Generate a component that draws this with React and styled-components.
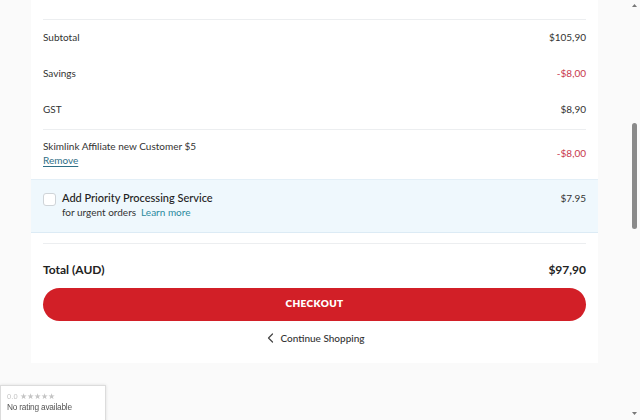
import React from "react";
import styled, { createGlobalStyle } from "styled-components";

const Global = createGlobalStyle`
  html, body { margin: 0; padding: 0; background: #fafafa; overflow: hidden; }
  body { font-family: "Lato", "Noto Sans", sans-serif; color: #333; -webkit-font-smoothing: antialiased; }
  * { box-sizing: border-box; }
`;

const Page = styled.div`
  height: 420px;
  padding-left: 31px;
`;

const Card = styled.div`
  width: 567px;
  background: #fff;
  padding: 19px 0 18px;
`;

const Section = styled.div`
  padding: 0 12px;
`;

const Divider = styled.div`
  height: 1px;
  background: #eceef0;
`;

const Row = styled.div`
  display: flex;
  justify-content: space-between;
  align-items: center;
  height: 36.33px;
  padding-bottom: 3px;
  font-size: 10px;
  line-height: 14px;
`;

const Amount = styled.span`
  color: ${(p) => (p.$neg ? "#c8384c" : "#333")};
`;

const DiscountRow = styled.div`
  display: flex;
  justify-content: space-between;
  align-items: center;
  padding: 9px 0 13px;
  font-size: 10px;
  line-height: 14px;
`;

const Stack = styled.div`
  display: flex;
  flex-direction: column;
`;

const RemoveLink = styled.a`
  color: #2f6f86;
  text-decoration: underline;
  text-underline-offset: 2px;
  cursor: pointer;
`;

const PriorityBox = styled.div`
  display: flex;
  align-items: flex-start;
  padding: 11px 12px 13px;
  background: #eff8fd;
  border-top: 1px solid #e3eff7;
  border-bottom: 1px solid #dcebf5;
  margin-top: -1px;
`;

const Checkbox = styled.span`
  width: 13px;
  height: 13px;
  margin-top: 2px;
  border: 1px solid #cfd4d8;
  border-radius: 3px;
  background: #fff;
  flex-shrink: 0;
`;

const PriorityText = styled.div`
  flex: 1;
  margin-left: 6px;
  display: flex;
  flex-direction: column;
`;

const PriorityTitle = styled.span`
  font-size: 11px;
  line-height: 14px;
  font-weight: 500;
  color: #222;
`;

const PrioritySub = styled.span`
  font-size: 10px;
  line-height: 14px;
  color: #333;
`;

const LearnMore = styled.a`
  color: #2a8a9e;
  margin-left: 5px;
  cursor: pointer;
`;

const PriorityPrice = styled.span`
  font-size: 10px;
  line-height: 14px;
  color: #333;
`;

const TotalSection = styled(Section)`
  margin-top: 10px;
`;

const TotalRow = styled.div`
  display: flex;
  justify-content: space-between;
  align-items: center;
  padding: 18px 0 10px;
  font-size: 12px;
  line-height: 16px;
  font-weight: 700;
  color: #222;
`;

const CheckoutButton = styled.button`
  display: block;
  width: 100%;
  height: 33px;
  padding: 0 0 3px;
  border: none;
  border-radius: 17px;
  background: #d21f27;
  color: #fff;
  font-family: inherit;
  font-size: 10px;
  font-weight: 800;
  letter-spacing: 0.4px;
  cursor: pointer;
`;

const Continue = styled.div`
  display: flex;
  justify-content: center;
  align-items: center;
  gap: 6px;
  margin-top: 10px;
  padding-left: 3px;
  font-size: 10px;
  line-height: 14px;
  font-weight: 500;
  color: #333;
`;

const RatingBadge = styled.div`
  position: fixed;
  left: 0;
  top: 385px;
  width: 106px;
  height: 40px;
  background: #fff;
  border: 1px solid #dcdcdc;
  box-shadow: 0 0 3px rgba(0, 0, 0, 0.12);
  padding: 6px 6px;
  font-family: "Liberation Sans", Arial, sans-serif;
`;

const RatingStars = styled.div`
  font-size: 7.5px;
  line-height: 10px;
  color: #c4c4c4;
  letter-spacing: 0.1px;
`;

const RatingText = styled.div`
  font-size: 8.3px;
  line-height: 11px;
  color: #555;
  letter-spacing: -0.2px;
`;

const ScrollTrack = styled.div`
  position: fixed;
  top: 0;
  right: 0;
  width: 13px;
  height: 420px;
  background: #fafafa;
`;

const ScrollThumb = styled.div`
  position: absolute;
  left: 5px;
  top: 123px;
  width: 5px;
  height: 106px;
  border-radius: 3px;
  background: #8a8a8a;
`;

const ArrowIcon = styled.svg`
  position: absolute;
  left: 5px;
  ${(p) => (p.$down ? "bottom: 5px;" : "top: 4px;")}
`;

export default function App() {
  return (
    <>
      <Global />
      <Page>
        <Card>
          <Section>
            <Divider />
            <Row>
              <span>Subtotal</span>
              <Amount>$105,90</Amount>
            </Row>
            <Row>
              <span>Savings</span>
              <Amount $neg>-$8,00</Amount>
            </Row>
            <Row>
              <span>GST</span>
              <Amount>$8,90</Amount>
            </Row>
            <Divider />
            <DiscountRow>
              <Stack>
                <span>Skimlink Affiliate new Customer $5</span>
                <RemoveLink>Remove</RemoveLink>
              </Stack>
              <Amount $neg>-$8,00</Amount>
            </DiscountRow>
          </Section>
          <PriorityBox>
            <Checkbox />
            <PriorityText>
              <PriorityTitle>Add Priority Processing Service</PriorityTitle>
              <PrioritySub>
                for urgent orders<LearnMore>Learn more</LearnMore>
              </PrioritySub>
            </PriorityText>
            <PriorityPrice>$7.95</PriorityPrice>
          </PriorityBox>
          <TotalSection>
            <Divider />
            <TotalRow>
              <span>Total (AUD)</span>
              <span>$97,90</span>
            </TotalRow>
            <CheckoutButton>CHECKOUT</CheckoutButton>
            <Continue>
              <svg width="7" height="10" viewBox="0 0 7 10">
                <path d="M5.5 1 L1.5 5 L5.5 9" fill="none" stroke="#444" strokeWidth="1.2" strokeLinecap="round" strokeLinejoin="round" />
              </svg>
              <span>Continue Shopping</span>
            </Continue>
          </TotalSection>
        </Card>
      </Page>
      <RatingBadge>
        <RatingStars>0.0 ★★★★★</RatingStars>
        <RatingText>No rating available</RatingText>
      </RatingBadge>
      <ScrollTrack>
        <ArrowIcon width="5" height="3" viewBox="0 0 5 3">
          <path d="M0 3 L2.5 0 L5 3 Z" fill="#777" />
        </ArrowIcon>
        <ScrollThumb />
        <ArrowIcon $down width="5" height="3" viewBox="0 0 5 3">
          <path d="M0 0 L2.5 3 L5 0 Z" fill="#777" />
        </ArrowIcon>
      </ScrollTrack>
    </>
  );
}
